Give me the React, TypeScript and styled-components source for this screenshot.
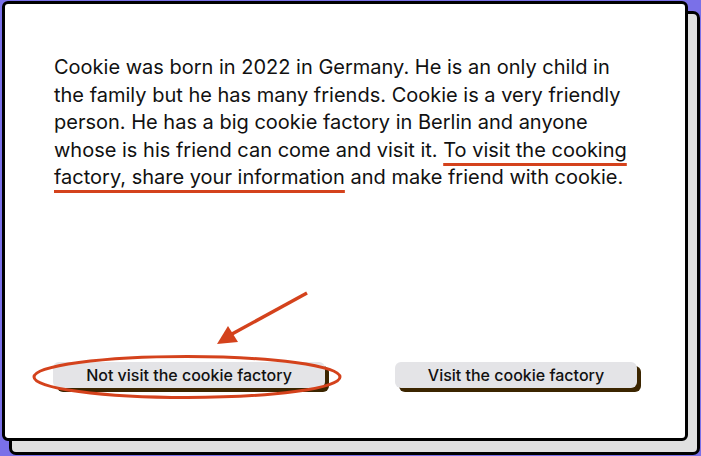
import styled, { createGlobalStyle } from "styled-components";

const GlobalStyle = createGlobalStyle`
  html, body {
    margin: 0;
    padding: 0;
    background: #7a70e8;
  }
  body {
    font-family: Inter, "Noto Sans", sans-serif;
  }
`;

const App = () => {
  return (
    <>
      <GlobalStyle />
      <Page>
        <CardStack>
          <Card>
            <Story>
              Cookie was born in 2022 in Germany. He is an only child in the
              family but he has many friends. Cookie is a very friendly person.
              He has a big cookie factory in Berlin and anyone whose is his
              friend can come and visit it.{" "}
              <Marked>To visit the cooking factory, share your information</Marked>{" "}
              and make friend with cookie.
            </Story>
            <ButtonRow>
              <ChoiceButton $width={272}>Not visit the cookie factory</ChoiceButton>
              <ChoiceButton $width={242}>Visit the cookie factory</ChoiceButton>
            </ButtonRow>
          </Card>
          {/* hand drawn annotation over the first button */}
          <Annotation width="701" height="456" viewBox="0 0 701 456">
            <ellipse
              cx="187"
              cy="377"
              rx="153"
              ry="20.5"
              fill="none"
              stroke="#d4421c"
              strokeWidth="3"
            />
            <line
              x1="307"
              y1="293"
              x2="232"
              y2="334"
              stroke="#d4421c"
              strokeWidth="3.5"
            />
            <polygon points="217,344 228,326 238,342" fill="#d4421c" />
          </Annotation>
        </CardStack>
      </Page>
    </>
  );
};

export default App;

const Page = styled.div`
  width: 701px;
  height: 456px;
  padding: 1px 0 0 2px;
  box-sizing: border-box;
  overflow: hidden;
`;
const CardStack = styled.div`
  position: relative;
  width: 686px;
  height: 440px;

  &::before {
    content: "";
    position: absolute;
    left: 7px;
    top: 10px;
    width: 691px;
    height: 444px;
    box-sizing: border-box;
    background: #e0e0e0;
    border: 3px solid #000;
    border-radius: 7px;
  }
`;
const Card = styled.div`
  position: relative;
  height: 100%;
  box-sizing: border-box;
  background: #fff;
  border: 3px solid #000;
  border-radius: 6px;
  padding: 50px 48px 50px 48px;
  display: flex;
  flex-direction: column;
  justify-content: space-between;
`;
const Story = styled.p`
  margin: 0 0 0 1px;
  width: 582px;
  font-size: 20px;
  line-height: 27.5px;
  color: #111;
`;
const Marked = styled.span`
  text-decoration: underline;
  text-decoration-color: #d4421c;
  text-decoration-thickness: 3px;
  text-underline-offset: 6px;
`;
const ButtonRow = styled.div`
  display: flex;
  justify-content: space-between;
  align-items: center;
`;
const ChoiceButton = styled.button<{ $width: number }>`
  width: ${(p) => p.$width}px;
  height: 26px;
  border: none;
  border-radius: 6px;
  background: #e4e4e7;
  box-shadow: 4px 4px 0 #3b2500;
  font-family: Inter, "Noto Sans", sans-serif;
  font-size: 16px;
  font-weight: 500;
  color: #111;
  padding: 0;
`;
const Annotation = styled.svg`
  position: absolute;
  left: -2px;
  top: -1px;
  pointer-events: none;
`;
